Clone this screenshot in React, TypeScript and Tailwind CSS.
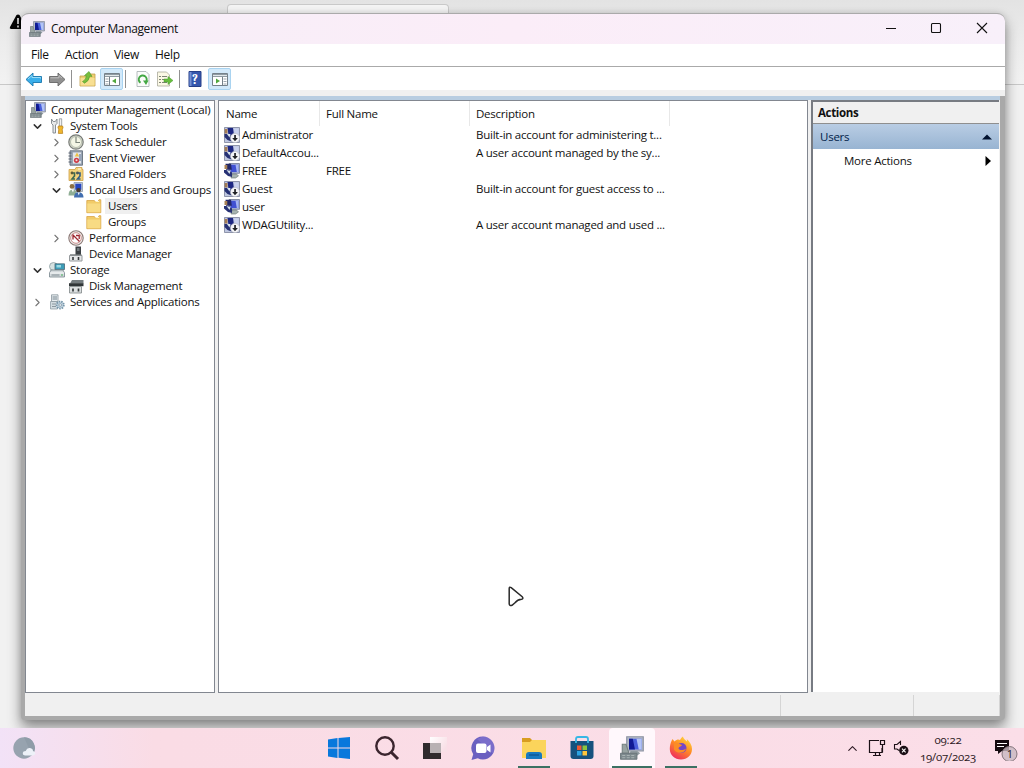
import type { ReactNode } from 'react';
import { clsx } from 'clsx';
import { ChevronDown, ChevronRight, ChevronUp } from 'lucide-react';

type IconName =
  | 'computer'
  | 'tools'
  | 'clock'
  | 'event'
  | 'shared'
  | 'people'
  | 'folder'
  | 'performance'
  | 'device'
  | 'storage'
  | 'disk'
  | 'services'
  | 'user'
  | 'userDisabled';

interface TreeItem {
  label: string;
  icon: IconName;
  indent: string;
  state?: 'open' | 'closed';
  selected?: boolean;
}

const treeItems: TreeItem[] = [
  { label: 'System Tools', icon: 'tools', indent: 'pl-[5px]', state: 'open' },
  { label: 'Task Scheduler', icon: 'clock', indent: 'pl-6', state: 'closed' },
  { label: 'Event Viewer', icon: 'event', indent: 'pl-6', state: 'closed' },
  { label: 'Shared Folders', icon: 'shared', indent: 'pl-6', state: 'closed' },
  { label: 'Local Users and Groups', icon: 'people', indent: 'pl-6', state: 'open' },
  { label: 'Users', icon: 'folder', indent: 'pl-[42px]', selected: true },
  { label: 'Groups', icon: 'folder', indent: 'pl-[42px]' },
  { label: 'Performance', icon: 'performance', indent: 'pl-6', state: 'closed' },
  { label: 'Device Manager', icon: 'device', indent: 'pl-6' },
  { label: 'Storage', icon: 'storage', indent: 'pl-[5px]', state: 'open' },
  { label: 'Disk Management', icon: 'disk', indent: 'pl-6' },
  { label: 'Services and Applications', icon: 'services', indent: 'pl-[5px]', state: 'closed' },
];

interface UserRow {
  name: string;
  fullName?: string;
  description?: string;
  disabled?: boolean;
}

const users: UserRow[] = [
  { name: 'Administrator', description: 'Built-in account for administering t...', disabled: true },
  { name: 'DefaultAccou...', description: 'A user account managed by the sy...', disabled: true },
  { name: 'FREE', fullName: 'FREE' },
  { name: 'Guest', description: 'Built-in account for guest access to ...', disabled: true },
  { name: 'user' },
  { name: 'WDAGUtility...', description: 'A user account managed and used ...', disabled: true },
];

const iconShapes: Record<IconName, ReactNode> = {
  computer: (
    <>
      <path d="M4.5.5h11v9.500h-11z" fill="#b4bac6" stroke="#8b92a2" strokeWidth=".8" />
      <path d="M6 1.800h8.500V9H6z" fill="#4a60dc" />
      <path d="M11 1.800h3.500V9H12.500z" fill="#b3c4f6" />
      <path d="M6 1.800h2.500L10 9H6z" fill="#0f1a94" />
      <path d="M1.500 5.500H4l2 6H1.500z" fill="#98a3a2" stroke="#758180" strokeWidth=".7" />
      <path d="M7 10h4.500l2 1.500-2 1.500H6z" fill="#8f9aa0" />
      <path d="M.3 11.500h11v4H.3z" fill="#7e8a8e" stroke="#667277" strokeWidth=".6" />
      <path d="M1.500 13h8.500M1.500 14.500h8.500" stroke="#aeb7b8" strokeWidth=".6" strokeDasharray="2 1" />
    </>
  ),
  tools: (
    <>
      <path d="M2.500 1v4.500L4 7v8h2.500V7L8 5.500V1L6.300 3.500H4.200z" fill="#e7e9ea" stroke="#7d858a" strokeWidth=".9" />
      <path d="M10.300.8h2.400v7.500h-2.400z" fill="#f2f2f2" stroke="#8b9194" strokeWidth=".8" />
      <path d="M9.400 8h4.200l.5 2-.9 1 .5 4.400H9.300l.5-4.400-.9-1z" fill="#f0b72e" stroke="#b47a16" strokeWidth=".7" />
    </>
  ),
  clock: (
    <>
      <circle cx="8" cy="8" r="7.200" fill="#d4d7cd" stroke="#777b76" strokeWidth="1.200" />
      <circle cx="8" cy="8" r="5.500" fill="#f4f6e6" stroke="#b7beae" />
      <path d="M8 3v5.500h4" fill="none" stroke="#7c857c" strokeWidth="1.200" />
    </>
  ),
  event: (
    <>
      <path d="M2 .8h12.500v14.400H2z" fill="#9aa6b6" stroke="#66707d" strokeWidth=".9" />
      <path d="M5 2.500h8v11H5z" fill="#e4e6e9" />
      <path d="M.5 3h3M.5 6h3M.5 9h3M.5 12h3" stroke="#555f6d" />
      <path d="M9 2.500l2.200 4H6.800z" fill="#edc043" />
      <circle cx="8.500" cy="10.300" r="2.600" fill="#cf3d48" />
      <circle cx="8.500" cy="10.300" r="1" fill="#f2dada" />
      <path d="M12 4v7" stroke="#49648e" />
    </>
  ),
  shared: (
    <>
      <path d="M1 3.500h6l1-2h6v2h1v11H1z" fill="#f2d27a" stroke="#cfa046" strokeWidth=".8" />
      <path d="M10 3h3" stroke="#fffbe7" />
      <path d="M3 7h3.500v3L4 13h3" fill="none" stroke="#3d6a50" strokeWidth="1.600" />
      <path d="M8.500 7H12v3l-2.500 3h3" fill="none" stroke="#315e86" strokeWidth="1.600" />
      <circle cx="4" cy="7" r="1.400" fill="#5c5b38" />
      <circle cx="9.500" cy="7" r="1.400" fill="#4c5a58" />
    </>
  ),
  people: (
    <>
      <path d="M6 .5h8.500v9H6z" fill="#c6cee0" stroke="#8792a2" strokeWidth=".7" />
      <path d="M7.300 1.800h6v6h-6z" fill="#2445c0" />
      <circle cx="4" cy="4.400" r="2.400" fill="#8c7043" />
      <path d="M.5 13.500c0-4 1.500-6 4-6S9 9.500 9 13.500z" fill="#8fae94" />
      <circle cx="10.500" cy="8.300" r="2.200" fill="#463930" />
      <path d="M6 15.500c0-3.500 1.600-5.200 4.500-5.200s5 1.700 5 5.200z" fill="#416eb0" />
      <path d="M3.500 7.500l1.500 3 1-3M9.800 10.500l1 3 1-3" fill="#fff" />
    </>
  ),
  folder: (
    <>
      <path d="M.8 2.500H8l1.500 1H12l1-1.800h1.800v13H.8z" fill="#f1cb68" stroke="#d9a545" strokeWidth=".8" />
      <path d="M1.300 5.500h13v8.700h-13z" fill="#f8db84" />
      <path d="M9.500 3.500h3.500" stroke="#fff4c7" strokeWidth="1.200" />
    </>
  ),
  performance: (
    <>
      <circle cx="8" cy="8" r="7.200" fill="#eeeeec" stroke="#8b7774" strokeWidth="1.100" />
      <circle cx="8" cy="8" r="5.300" fill="#fff" stroke="#c17572" strokeWidth=".8" />
      <path d="M4.500 4.500l7 7M5 9.500V5M8 5.500h3.200V9" fill="none" stroke="#9e2630" strokeWidth="1.300" />
    </>
  ),
  device: (
    <>
      <path d="M7.500.5h5.500V9H7.500z" fill="#3c4144" />
      <path d="M9 2h2.500v3H9z" fill="#72797d" />
      <path d="M1.500 9.500H14V15H1.500z" fill="#e5e7e8" stroke="#969a9d" />
      <path d="M2 8.800h11.500" stroke="#73787a" />
      <path d="M5 11v3M10.500 11v3" stroke="#35393b" strokeWidth="1.600" />
    </>
  ),
  storage: (
    <>
      <circle cx="4.500" cy="4.500" r="4" fill="#d6e2e1" stroke="#8c9ca0" strokeWidth=".8" />
      <path d="M6 1.800h9.500v5.700H6z" fill="#3c9db8" stroke="#4a6876" strokeWidth=".8" />
      <path d="M7.500 3h4.500v2.500H7.500z" fill="#9ad9e3" />
      <path d="M2 8h12l1.500 3v4H.5v-4z" fill="#d4dadd" stroke="#76858b" strokeWidth=".8" />
      <path d="M1 11h14" stroke="#f8fafa" />
      <path d="M2.500 13h8" stroke="#7e8b91" />
      <path d="M12 13h2" stroke="#43ae56" />
    </>
  ),
  disk: (
    <>
      <path d="M4 2h11.500v3.500H2z" fill="#747c7f" />
      <path d="M1 5.200h14.500v3H1z" fill="#303638" />
      <path d="M1.500 8.500h12V15h-12z" fill="#dce0e1" stroke="#7e8587" strokeWidth=".8" />
      <path d="M5 10.500v3M10.500 10.500v3" stroke="#34393b" strokeWidth="1.700" />
    </>
  ),
  services: (
    <>
      <path d="M2.500.8h6.500v6.700H2.500z" fill="#e8edf0" stroke="#89959d" strokeWidth=".8" />
      <path d="M3.500 3h4.500M3.500 5h4.500" stroke="#75858e" />
      <path d="M1.500 7.500h7v7.500h-7z" fill="#d3dce1" stroke="#87959d" strokeWidth=".7" />
      <path d="M3 10h4M3 12.500h4" stroke="#8b989f" />
      <circle cx="11.200" cy="11" r="3.600" fill="#bfd2df" stroke="#7796aa" strokeDasharray="1.500 1" strokeWidth="1.800" />
      <circle cx="11.200" cy="11" r="1.300" fill="#fff" stroke="#73899a" strokeWidth=".7" />
    </>
  ),
  user: (
    <>
      <path d="M5 .5h10.500v9.800H5z" fill="#aab4d8" stroke="#6e7893" strokeWidth=".8" />
      <path d="M6.500 1.800h8V9h-8z" fill="#4050d2" />
      <path d="M11.500 1.800h3V9h-1.700z" fill="#a5b5f2" />
      <path d="M8 11h4.500l2 2-3 2H7z" fill="#a6b3b0" stroke="#66716f" strokeWidth=".6" />
      <path d="M1.500.8H7l.8 6H2z" fill="#222665" />
      <path d="M.5 2h2.800v4H.5z" fill="#a88155" />
      <path d="M0 7h5l3 2.500V14l-4-1L0 9.500z" fill="#263174" />
      <path d="M2.500 7l3 4L6.500 8" fill="#dbe7ef" />
    </>
  ),
  userDisabled: (
    <>
      <path d="M.5.5h15v15H.5z" fill="#bfc7e0" stroke="#7a8199" strokeWidth=".8" />
      <path d="M3.500 1H9l1 7H4.500z" fill="#1e2883" />
      <path d="M10 1.500h4.500V9H11z" fill="#c9d1ee" />
      <path d="M.7 2h2.800v4.500H.7z" fill="#a37c55" />
      <path d="M.5 7h5.500l1.500 3v4.500l-4-1.500-3-3z" fill="#263174" />
      <path d="M3 7l2.500 3.500L6.500 7" fill="#dbe7ef" />
      <circle cx="11" cy="11" r="4.700" fill="#f4f4f7" stroke="#a7abb7" strokeWidth=".5" />
      <path d="M10.200 8h1.700v3h2L11 14.200 8.200 11h2z" fill="#202124" />
    </>
  ),
};

function Icon({ name, className }: { name: IconName; className?: string }) {
  return (
    <svg viewBox="0 0 16 16" className={clsx('shrink-0', className ?? 'size-4')}>
      {iconShapes[name]}
    </svg>
  );
}

function TitleBar() {
  return (
    <div className="flex h-[30px] items-center bg-linear-to-r from-[#f6eff8] via-[#fbedf8] to-[#f8f0fa] pl-2">
      <Icon name="computer" />
      <span className="ml-1.5 text-[12px] tracking-[-0.36px]">Computer Management</span>
      <div className="mr-1 ml-auto flex items-center">
        <svg width="120" height="20" viewBox="0 0 120 20" fill="none" stroke="#111" strokeWidth="1.1">
          <path d="M5 9.500h10" />
          <rect x="50.5" y="4.5" width="9" height="9" rx="1" />
          <path d="M96 4l10 10M106 4l-10 10" />
        </svg>
      </div>
    </div>
  );
}

function ToolButton({ active, className, children }: { active?: boolean; className?: string; children: ReactNode }) {
  return (
    <button
      className={clsx(
        'flex h-[22px] w-[23px] items-center justify-center',
        active && 'rounded-[2px] border border-[#a9d3f0] bg-[#d2e9fa]',
        className
      )}
    >
      <svg width="18" height="18" viewBox="0 0 18 18" className="shrink-0">
        {children}
      </svg>
    </button>
  );
}

function ToolDivider({ className }: { className?: string }) {
  return <div className={clsx('h-[18px] w-px bg-[#919191]', className)} />;
}

function PaneShape({ right }: { right?: boolean }) {
  return (
    <>
      <path d="M1.500 3.500h15v12h-15z" fill="#fff" stroke="#75818a" />
      <path d="M2 4h14v3H2z" fill="#8f9ba3" />
      <path d="M2 5.500h14" stroke="#e2e8eb" />
      <path d={right ? 'M11.500 7v8' : 'M6.500 7v8'} stroke="#75818a" />
      <path d={right ? 'M12.500 9h3M12.500 11.500h3M12.500 14h3' : 'M2.500 9h3M2.500 11.500h3M2.500 14h3'} stroke="#9ca7ae" />
      <path d={right ? 'M5 8.500v5l4-2.500z' : 'M13 8.500v5l-4-2.500z'} fill="#50a73c" />
    </>
  );
}

function ToolBar() {
  return (
    <div className="flex h-6 items-center border-t border-[#aaa] bg-white pl-px">
      <ToolButton>
        <path d="M1 9.500l7-6.500v3.500h8.500v6H8V16z" fill="#39aeea" stroke="#1976ad" strokeWidth=".9" />
        <path d="M3 9l4-3.500V7.500h8.500v1" fill="none" stroke="#98dcf7" />
      </ToolButton>
      <ToolButton>
        <path d="M17 9.500L10 3v3.500H1.500v6H10V16z" fill="#909090" stroke="#666" strokeWidth=".9" />
        <path d="M2.500 7.800H11V5.500L14 8" fill="none" stroke="#bebebe" />
      </ToolButton>
      <ToolDivider className="mr-[3px] ml-[3px]" />
      <ToolButton>
        <path d="M2 6h6l1-2h8v12H2z" fill="#edcf72" stroke="#c3a04b" strokeWidth=".8" />
        <path d="M2.500 8h14v7.500h-14z" fill="#f8df92" />
        <path d="M4.500 11.500q3-1 4-5.500L6.500 5.500 11 1.500l3 5-2.300-.3q-.7 5-5.200 7z" fill="#78bd3c" stroke="#4c9a2d" strokeWidth=".6" />
      </ToolButton>
      <ToolButton active className="ml-[2px]">
        <PaneShape />
      </ToolButton>
      <ToolDivider className="mr-[5px] ml-0.5" />
      <ToolButton>
        <path d="M3 1.500h9l3 3v12H3z" fill="#fbfcfa" stroke="#a5adaf" strokeWidth=".8" />
        <path d="M6.500 12.800a4 4 0 1 1 5.500-1" fill="none" stroke="#44a844" strokeWidth="1.900" />
        <path d="M9 10.500h5.500L12 15z" fill="#44a844" />
      </ToolButton>
      <ToolButton className="-ml-px">
        <path d="M1.500 2h9l3 3v11h-12z" fill="#fbf8e5" stroke="#a9a99b" strokeWidth=".8" />
        <path d="M3 6.500h2M6 6.500h5M3 9.500h2M6 9.500h3M3 12.500h2M6 12.500h5" stroke="#7d8476" />
        <path d="M8 9h4V6.500l5 4-5 4V12H8z" fill="#67bd3d" stroke="#479b31" strokeWidth=".5" />
      </ToolButton>
      <ToolDivider className="mr-[3px] ml-[3px]" />
      <ToolButton>
        <path d="M3 1.500h12v15H3z" fill="#3557ad" stroke="#263f87" />
        <path d="M3.500 2h2v14h-2z" fill="#7590d2" />
        <text x="6" y="13.500" fill="#fff" className="font-serif text-[13px] font-bold">
          ?
        </text>
      </ToolButton>
      <ToolButton active className="ml-0.5">
        <PaneShape right />
      </ToolButton>
    </div>
  );
}

function TreePane() {
  return (
    <div className="w-[190px] border border-[#828790] bg-white pt-px">
      <div className="flex h-4 items-center pl-1">
        <Icon name="computer" />
        <span className="ml-[5px] whitespace-nowrap">Computer Management (Local)</span>
      </div>
      {treeItems.map((item) => (
        <div key={item.label} className={clsx('flex h-4 items-center', item.indent)}>
          <span className="flex w-[18px] shrink-0 items-center">
            {item.state === 'open' && <ChevronDown size={13} strokeWidth={2.7} color="#333" />}
            {item.state === 'closed' && <ChevronRight size={13} strokeWidth={2} color="#777" />}
          </span>
          <Icon name={item.icon} />
          <span
            className={clsx(
              'px-[3px] leading-4 whitespace-nowrap',
              item.icon === 'folder' ? 'ml-[3px]' : 'ml-0.5',
              item.selected && 'bg-[#efefef]'
            )}
          >
            {item.label}
          </span>
        </div>
      ))}
    </div>
  );
}

function UserList() {
  return (
    <div className="w-[590px] border border-[#828790] bg-white">
      <div className="flex h-[25px] items-center">
        <div className="flex h-full w-[101px] items-center border-r border-[#e8e8e8] pl-[7px]">Name</div>
        <div className="flex h-full w-[150px] items-center border-r border-[#e8e8e8] pl-1.5">Full Name</div>
        <div className="flex h-full w-[200px] items-center border-r border-[#e8e8e8] pl-1.5">Description</div>
      </div>
      {users.map((user) => (
        <div key={user.name} className="flex h-[18px] items-center whitespace-nowrap">
          <div className="flex w-[107px] shrink-0 items-center pl-[5px]">
            <Icon name={user.disabled ? 'userDisabled' : 'user'} />
            <span className="ml-0.5">{user.name}</span>
          </div>
          <div className="w-[150px] shrink-0">{user.fullName}</div>
          <div>{user.description}</div>
        </div>
      ))}
    </div>
  );
}

function ActionsPane() {
  return (
    <div className="mb-px w-[188px] border-t-2 border-l-2 border-[#777b82] bg-white">
      <div className="flex h-[22px] items-center border-b border-[#8f8f8f] bg-[#f0f0f0] pl-[5px] font-bold tracking-[-0.35px]">
        Actions
      </div>
      <div className="flex h-[25px] items-center justify-between bg-linear-to-b from-[#b9cde4] to-[#98b4d2] pr-[7px] pl-[7px] text-[#001c49]">
        Users
        <svg width="10" height="6" viewBox="0 0 10 6">
          <path d="M0 5.500L5 .5l5 5z" fill="#02122f" />
        </svg>
      </div>
      <div className="flex h-[23px] items-center justify-between pr-2 pl-[31px]">
        More Actions
        <svg width="6" height="10" viewBox="0 0 6 10">
          <path d="M.5 0L6 5 .5 10z" fill="#000" />
        </svg>
      </div>
    </div>
  );
}

function ManagementWindow() {
  return (
    <div className="absolute top-[13px] left-[21px] flex h-[707px] w-[984px] flex-col overflow-hidden rounded-t-lg rounded-b-[4px] border-t border-[#aaa] bg-[#a9a9a9] shadow-[0_8px_14px_rgba(0,0,0,0.42),0_0_6px_rgba(0,0,0,0.12)]">
      <TitleBar />
      <div className="flex h-[22px] items-center bg-white pl-2.5 text-[12px] tracking-[-0.3px]">
        <span className="w-[34px]">File</span>
        <span className="w-[49px]">Action</span>
        <span className="w-[41px]">View</span>
        <span>Help</span>
      </div>
      <ToolBar />
      <div className="h-[6px] bg-[#f0f0f0]" />
      <div className="mr-[5px] ml-1 flex h-[597px] gap-[3px] border-t-4 border-[#b8cde1] bg-[#f0f0f0]">
        <TreePane />
        <UserList />
        <ActionsPane />
      </div>
      <div className="mr-[5px] ml-1 flex h-[23px] bg-[#f0f0f0] pt-0.5">
        <div className="w-[756px] border-r border-[#d5d5d5]" />
        <div className="w-[133px] border-r border-[#d5d5d5]" />
        <div className="flex-1 border-r border-[#d5d5d5]" />
      </div>
    </div>
  );
}

function WindowsLogo() {
  return (
    <svg width="22" height="22" viewBox="0 0 22 22" fill="#0878dc">
      <path d="M0 2.500L9.500 1v9.500H0zM10.500.9L22 0v10.500H10.500zM0 11.500h9.500V21L0 19.500zM10.500 11.500H22V22l-11.500-1.200z" />
    </svg>
  );
}

function Firefox() {
  return (
    <svg width="24" height="24" viewBox="0 0 24 24">
      <defs>
        <linearGradient id="fox" x1="0.8" y1="0" x2="0.2" y2="1">
          <stop offset="0" stopColor="#ffdc3e" />
          <stop offset=".45" stopColor="#ff8b24" />
          <stop offset="1" stopColor="#ed2463" />
        </linearGradient>
      </defs>
      <path d="M2.500 5l1-2 2 2.500C8 3 10 3.500 11 4c1-2 2-3 3-3.500 0 2 2 3 4 5 0-1 0-1.500-.3-2.500C21 6 23 9 23 13c0 6-4.700 10.500-11 10.500S.8 19 .8 13c0-3 .7-6 1.700-8z" fill="url(#fox)" />
      <circle cx="12.500" cy="12" r="5" fill="#7546c8" />
      <path d="M5 7c3-1 5 1 8 2-1 2-3.500 1.500-3.500 3.500 1 2 5 2 7.500 0-1 5-9 6-12 1z" fill="#fb8c26" />
    </svg>
  );
}

function TaskButton({ open, active, children }: { open?: boolean; active?: boolean; children: ReactNode }) {
  return (
    <div className={clsx('flex h-10 flex-col items-center justify-end', active ? 'w-[46px] rounded-t bg-[#fff8fc]' : 'w-8')}>
      <div className="flex h-9 items-center pt-1">{children}</div>
      <div className={clsx('mt-0.5 h-0.5', open && 'bg-[#3c7163]', active ? 'w-10' : 'w-8')} />
    </div>
  );
}

function TaskBar() {
  return (
    <div className="absolute inset-x-0 bottom-0 flex h-10 items-center bg-linear-to-r from-[#f2e2f7] via-[#fadce5] via-15% to-[#fbdee8]">
      <svg width="24" height="24" viewBox="0 0 24 24" className="ml-3 shrink-0">
        <circle cx="12" cy="12" r="10.700" fill="#97a3af" />
        <path d="M12 1.300a10.700 10.700 0 0 1 8 18z" fill="#8f9ca8" />
        <path d="M13 19.500q-2.500-.5-2.300-2.500t3-2q1.300-3.500 4.300-3t3 3q2.500.5 2.300 2.500t-2.800 2z" fill="#edf1f8" />
      </svg>
      <div className="ml-[287px] flex items-center">
        <TaskButton>
          <WindowsLogo />
        </TaskButton>
        <div className="w-4" />
        <TaskButton>
          <svg width="26" height="26" viewBox="0 0 26 26" fill="none" stroke="#3b252e">
            <circle cx="11" cy="11" r="8.700" strokeWidth="2.400" />
            <path d="M17.500 17.500l6.500 6.500" strokeWidth="3" />
          </svg>
        </TaskButton>
        <div className="w-4" />
        <TaskButton>
          <svg width="24" height="24" viewBox="0 0 24 24">
            <defs>
              <linearGradient id="pane" x1="0" y1="0" x2="1" y2="0.6">
                <stop offset="0" stopColor="#fff" />
                <stop offset="1" stopColor="#f8dfe6" />
              </linearGradient>
            </defs>
            <path d="M7 1h17v15H7z" fill="url(#pane)" />
            <path d="M0 7h18v16H0z" fill="#302b2d" />
            <path d="M7 7h11v10H7z" fill="#b8b1b3" />
          </svg>
        </TaskButton>
        <div className="w-4" />
        <TaskButton>
          <svg width="26" height="26" viewBox="0 0 26 26">
            <path d="M13 1.500a11.500 11.500 0 1 1-5.200 21.800L1.500 25l1.700-5.800A11.500 11.500 0 0 1 13 1.500z" fill="#6a5fc0" />
            <path d="M13 1.500a11.500 11.500 0 0 1 10 17L7 4z" fill="#8e7fd6" opacity=".45" />
            <rect x="6" y="8.500" width="10.500" height="9.500" rx="2" fill="#fff" />
            <path d="M17 12l3.500-2.500v8L17 15z" fill="#fff" />
          </svg>
        </TaskButton>
        <div className="w-[19px]" />
        <TaskButton open>
          <svg width="26" height="24" viewBox="0 0 26 24">
            <path d="M1 2h8l2 2h14v9H1z" fill="#d89d20" />
            <path d="M1 6h8l2-2h14v18H1z" fill="#fbd45b" />
            <path d="M5 23v-4q0-3 3-3h10q3 0 3 3v4z" fill="#1979bf" />
            <path d="M8 19h10" stroke="#115a96" strokeWidth="1.500" />
          </svg>
        </TaskButton>
        <div className="w-4" />
        <TaskButton>
          <svg width="24" height="26" viewBox="0 0 24 26">
            <path d="M.5 6h23v15q0 3-3 3h-17q-3 0-3-3z" fill="#16527e" />
            <path d="M6 8V4q0-2 2-2h8q2 0 2 2v4" fill="none" stroke="#37b7e5" strokeWidth="1.800" />
            <path d="M7 10.500h4.500V15H7z" fill="#f25833" />
            <path d="M12.500 10.500H17V15h-4.500z" fill="#8bc43f" />
            <path d="M7 16h4.500v4.500H7z" fill="#2ba4e2" />
            <path d="M12.500 16H17v4.500h-4.500z" fill="#ffc73c" />
          </svg>
        </TaskButton>
        <div className="w-[11px]" />
        <TaskButton open active>
          <Icon name="computer" className="size-6" />
        </TaskButton>
        <div className="w-2.5" />
        <TaskButton open>
          <Firefox />
        </TaskButton>
      </div>
      <div className="ml-auto flex items-center text-[#2c1823]">
        <ChevronUp size={15} strokeWidth={1.7} />
        <svg width="18" height="18" viewBox="0 0 18 18" fill="none" stroke="#1b1016" strokeWidth="1.2" className="ml-2">
          <path d="M11 1.500H1.500v12H14V9M5 16.500h8M7.500 13.500v3M11.500 13.500v3M12.500 1.500h4v4h-4zM14.500 5.500v8" />
        </svg>
        <svg width="16" height="16" viewBox="0 0 16 16" fill="none" stroke="#1b1016" strokeWidth="1.1" className="ml-[7px]">
          <path d="M6 10.500L4 9H1.500V4.500H4L7.500 1.500v3.500" />
          <circle cx="10.800" cy="10.500" r="4.700" fill="#1b1016" stroke="none" />
          <path d="M9 8.700l3.600 3.600M12.600 8.700L9 12.300" stroke="#fff" />
        </svg>
        <div className="ml-2.5 flex w-[58px] flex-col items-center text-[11.5px] leading-[17px] tracking-[-0.25px] oldstyle-nums">
          <span>09:22</span>
          <span>19/07/2023</span>
        </div>
        <svg width="26" height="26" viewBox="0 0 26 26" className="mr-1 ml-[17px]">
          <path d="M1 5h14v11H8l-4 3v-3H1z" fill="#150b10" />
          <path d="M3 8.500h10M3 11.500h7" stroke="#fff" strokeWidth="1.200" />
          <circle cx="15.500" cy="19" r="7.500" fill="#c8b7bf" fillOpacity=".8" stroke="#84767d" />
          <text x="12.700" y="23" fill="#24171e" className="text-[11px]">
            1
          </text>
        </svg>
      </div>
    </div>
  );
}

export default function App() {
  return (
    <div className="relative h-[768px] w-[1024px] overflow-hidden bg-[#f1f1f1] font-['Open_Sans','Noto_Sans',sans-serif] text-[11.5px] leading-4 tracking-[-0.24px] text-[#111]">
      {/* Browser left open behind the console */}
      <div className="h-[85px] border-b border-[#c8c8c8] bg-linear-to-b from-[#e3e3e3] via-[#ececec] via-50% to-[#f2f2f2]">
        <div className="ml-[227px] h-3 w-[222px] translate-y-1 rounded-t border border-b-0 border-[#c9c9c9] bg-[#f4f4f4]" />
      </div>
      <svg width="18" height="16" viewBox="0 0 18 16" className="absolute top-[14px] left-[9px]">
        <path d="M7.500 1Q9 0 10.500 1L17 13q0 2-2 2H2q-2-.5-1-2z" fill="#050505" />
        <path d="M9 4v6M9 11.500v2" stroke="#fff" strokeWidth="1.500" />
      </svg>

      <ManagementWindow />
      <TaskBar />

      {/* Mouse pointer */}
      <svg width="20" height="24" viewBox="0 0 20 24" className="absolute top-[585px] left-[507px]">
        <path d="M2.200 3.500q0-2 2-.8l11 9q1.700 2-.7 2.600-4 .2-6.500 3.500l-3 2.500q-2.500 1-2.800-1.500z" fill="#fff" stroke="#292929" strokeWidth="1.500" />
      </svg>
    </div>
  );
}
